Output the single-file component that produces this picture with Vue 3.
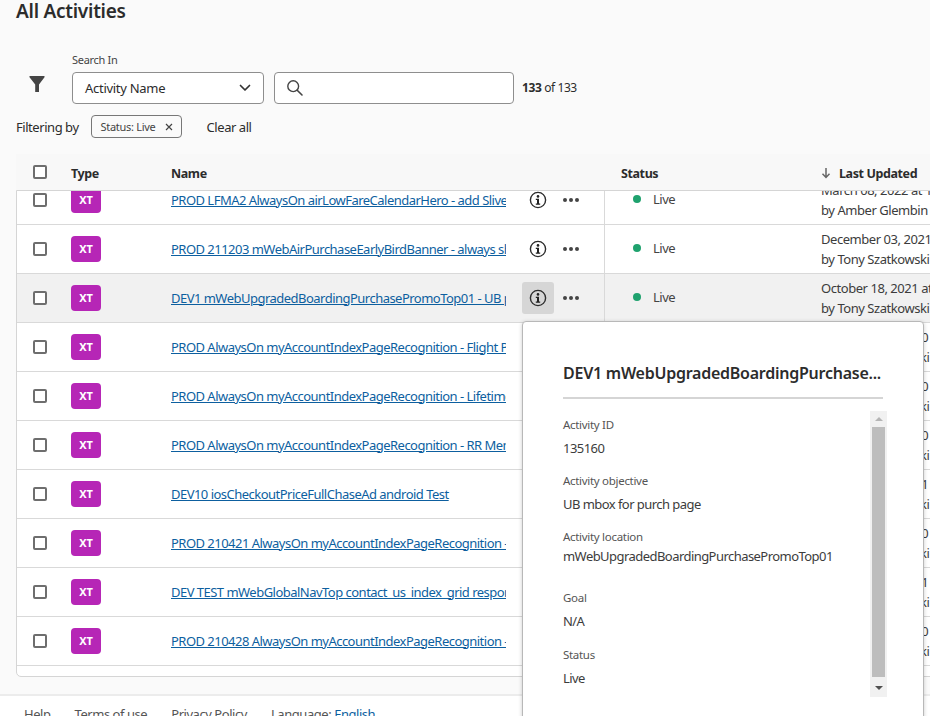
<script setup>
const rows = [
  { name: 'PROD LFMA2 AlwaysOn airLowFareCalendarHero - add Sliver Banner', date: 'March 08, 2022 at 11:02 AM', by: 'by Amber Glembin' },
  { name: 'PROD 211203 mWebAirPurchaseEarlyBirdBanner - always show', date: 'December 03, 2021 at 9:14 AM', by: 'by Tony Szatkowski' },
  { name: 'DEV1 mWebUpgradedBoardingPurchasePromoTop01 - UB purch page', date: 'October 18, 2021 at 3:40 PM', by: 'by Tony Szatkowski', active: true },
  { name: 'PROD AlwaysOn myAccountIndexPageRecognition - Flight Points', date: 'September 4, 2020 at 4:10 PM', by: 'by Tony Szatkowski' },
  { name: 'PROD AlwaysOn myAccountIndexPageRecognition - Lifetime Points', date: 'September 4, 2020 at 4:02 PM', by: 'by Tony Szatkowski' },
  { name: 'PROD AlwaysOn myAccountIndexPageRecognition - RR Member', date: 'September 4, 2020 at 3:58 PM', by: 'by Tony Szatkowski' },
  { name: 'DEV10 iosCheckoutPriceFullChaseAd android Test', date: 'September 4, 2021 at 1:20 PM', by: 'by Tony Szatkowski' },
  { name: 'PROD 210421 AlwaysOn myAccountIndexPageRecognition - Tier', date: 'September 4, 2020 at 9:41 AM', by: 'by Tony Szatkowski' },
  { name: 'DEV TEST mWebGlobalNavTop contact_us_index_grid responsive', date: 'September 4, 2021 at 2:15 PM', by: 'by Tony Szatkowski' },
  { name: 'PROD 210428 AlwaysOn myAccountIndexPageRecognition - Tier', date: 'September 4, 2020 at 9:30 AM', by: 'by Tony Szatkowski' }
]
const fields = [
  { label: 'Activity ID', value: '135160', cls: '' },
  { label: 'Activity objective', value: 'UB mbox for purch page', cls: '' },
  { label: 'Activity location', value: 'mWebUpgradedBoardingPurchasePromoTop01', cls: 'tight' },
  { label: 'Goal', value: 'N/A', cls: 'goal' },
  { label: 'Status', value: 'Live', cls: 'last' }
]
</script>

<template>
  <div class="page">
    <h1 class="title">All Activities</h1>

    <div class="search-row">
      <svg class="filter" viewBox="0 0 18 18" width="18" height="18">
        <path d="M1.5 1h15v1.3L11 9.4V17H7.2V9.4L1.5 2.3z" fill="#444" />
      </svg>
      <div class="search-in">
        <div class="small-label">Search In</div>
        <div class="select">
          <span>Activity Name</span>
          <svg viewBox="0 0 12 8" width="12" height="8"><path d="M1.5 1.5L6 6l4.5-4.5" fill="none" stroke="#333" stroke-width="1.7" stroke-linecap="round" stroke-linejoin="round" /></svg>
        </div>
      </div>
      <div class="search-box">
        <svg viewBox="0 0 18 18" width="18" height="18"><circle cx="7.2" cy="7.2" r="5.4" fill="none" stroke="#444" stroke-width="1.4" /><path d="M11.2 11.2L16 16" stroke="#444" stroke-width="1.6" stroke-linecap="round" /></svg>
      </div>
      <div class="count"><b>133</b> of 133</div>
    </div>

    <div class="filter-row">
      <span>Filtering by</span>
      <span class="chip">Status: Live
        <svg viewBox="0 0 8 8" width="8" height="8"><path d="M1 1l6 6M7 1L1 7" stroke="#444" stroke-width="1.2" /></svg>
      </span>
      <span class="clear">Clear all</span>
    </div>

    <div class="table">
      <div class="head grid">
        <div class="check-cell"><i class="check" /></div>
        <div>Type</div>
        <div>Name</div>
        <div />
        <div class="head-status">Status</div>
        <div class="head-date">
          <svg viewBox="0 0 10 12" width="10" height="12"><path d="M5 1v9M1.5 6.8L5 10.4l3.5-3.6" fill="none" stroke="#666" stroke-width="1.5" /></svg>
          <span>Last Updated</span>
        </div>
      </div>
      <div class="body">
        <div class="rows">
          <div v-for="row in rows" :key="row.name" class="row grid" :class="{ active: row.active }">
            <div class="check-cell"><i class="check" /></div>
            <div><span class="badge">XT</span></div>
            <div class="name"><a>{{ row.name }}</a></div>
            <div class="actions">
              <span class="info" :class="{ on: row.active }">
                <svg viewBox="0 0 18 18" width="18" height="18">
                  <circle cx="9" cy="9" r="7.6" fill="none" stroke="#2c2c2c" stroke-width="1.4" />
                  <circle cx="9" cy="5.4" r="1.3" fill="#222" />
                  <path d="M6.8 7.8h3.2v4.7h1.2v1.2H6.8v-1.2H8V9H6.8z" fill="#222" />
                </svg>
              </span>
              <span class="dots"><i /><i /><i /></span>
            </div>
            <div class="status"><i class="dot" />Live</div>
            <div class="date">
              <div>{{ row.date }}</div>
              <div>{{ row.by }}</div>
            </div>
          </div>
        </div>
      </div>
    </div>

    <footer class="footer">
      <span>Help</span>
      <span>Terms of use</span>
      <span>Privacy Policy</span>
      <span>Language: <a>English</a></span>
    </footer>

    <aside class="popover">
      <div class="pop-title">DEV1 mWebUpgradedBoardingPurchase...</div>
      <div class="pop-body">
        <div class="fields">
          <div v-for="f in fields" :key="f.label" class="field" :class="f.cls">
            <div class="f-label">{{ f.label }}</div>
            <div class="f-value">{{ f.value }}</div>
          </div>
        </div>
        <div class="scrollbar">
          <i class="arrow up" />
          <div class="thumb" />
          <i class="arrow down" />
        </div>
      </div>
    </aside>
  </div>
</template>

<style>
html, body { margin: 0; height: 716px; overflow: hidden; }
</style>

<style scoped>
.page {
  position: relative;
  width: 930px;
  height: 716px;
  overflow: hidden;
  background: #fafafa;
  color: #2c2c2c;
  font-family: "Noto Sans", sans-serif;
  font-size: 13px;
  letter-spacing: -0.52px;
  display: flex;
  flex-direction: column;
}
i { display: block; }
.title {
  margin: -2px 0 0 16px;
  font-size: 19px;
  line-height: 26px;
  font-weight: 600;
  letter-spacing: -0.25px;
  color: #2c2c2c;
  height: 26px;
}
.search-row {
  display: flex;
  align-items: flex-end;
  margin: 29px 0 0 16px;
  height: 52px;
}
.filter { margin: 0 26px 11px 12px; }
.small-label { font-size: 11px; line-height: 14px; color: #444; margin-bottom: 5px; letter-spacing: -0.3px; }
.select {
  width: 192px;
  height: 32px;
  box-sizing: border-box;
  border: 1px solid #8e8e8e;
  border-radius: 4px;
  background: #fff;
  display: flex;
  align-items: center;
  justify-content: space-between;
  padding: 0 12px;
  letter-spacing: -0.28px;
}
.search-box {
  width: 240px;
  height: 32px;
  margin-left: 10px;
  box-sizing: border-box;
  border: 1px solid #8e8e8e;
  border-radius: 4px;
  background: #fff;
  display: flex;
  align-items: center;
  padding-left: 11px;
}
.count { margin-left: 8px; line-height: 32px; font-size: 12px; letter-spacing: -0.4px; }
.filter-row {
  display: flex;
  align-items: center;
  margin: 11px 0 0 16px;
  height: 23px;
  letter-spacing: -0.45px;
}
.chip {
  margin-left: 12px;
  width: 91px;
  height: 23px;
  box-sizing: border-box;
  border: 1px solid #777;
  border-radius: 4px;
  font-size: 11px;
  letter-spacing: -0.3px;
  color: #444;
  display: flex;
  align-items: center;
  justify-content: space-between;
  padding: 0 8px 0 9px;
}
.clear { margin-left: 25px; }
.table {
  margin: 16px 0 0 16px;
  width: 1100px;
  height: 522px;
  display: flex;
  flex-direction: column;
}
.grid {
  display: grid;
  grid-template-columns: 55px 100px 335px 98px 217px 1fr;
  align-items: center;
}
.head {
  height: 36px;
  flex: none;
  background: #f8f8f8;
  font-weight: 700;
  font-size: 12.5px;
  letter-spacing: -0.4px;
  box-sizing: border-box;
  padding-top: 2px;
}
.head > .check-cell { padding-bottom: 3px; }
.head-status { padding-left: 17px; }
.head-date { display: flex; align-items: center; gap: 8px; }
.check-cell { padding-left: 17px; }
.check {
  width: 14px;
  height: 14px;
  box-sizing: border-box;
  border: 2px solid #6e6e6e;
  border-radius: 2px;
  background: #fff;
}
.body {
  flex: none;
  height: 487px;
  box-sizing: border-box;
  overflow: hidden;
  background: #fff;
  border: 1px solid #d5d5d5;
  border-radius: 0 0 0 5px;
}
.rows { margin: -15px 0 0 -1px; }
.row {
  height: 49px;
  box-sizing: border-box;
  border-bottom: 1px solid #d9d9d9;
}
.row.active { background: #f1f1f1; }
.badge {
  display: flex;
  align-items: center;
  justify-content: center;
  width: 30px;
  height: 26px;
  padding-bottom: 1px;
  box-sizing: border-box;
  border-radius: 4px;
  background: #b626b6;
  color: #fff;
  font-size: 11px;
  font-weight: 700;
  letter-spacing: 0;
}
.name { overflow: hidden; white-space: nowrap; padding-bottom: 1px; }
.name a { color: #0d5f9f; text-decoration: underline; }
.actions { display: flex; align-items: center; padding-left: 16px; }
.info {
  width: 32px;
  height: 32px;
  border-radius: 3px;
  display: flex;
  align-items: center;
  justify-content: center;
}
.info.on { background: #d6d6d6; }
.dots { display: flex; gap: 2px; margin-left: 9px; }
.dots i { width: 4px; height: 4px; border-radius: 50%; background: #444; }
.status {
  align-self: stretch;
  border-left: 1px solid #d9d9d9;
  display: flex;
  align-items: center;
  padding: 0 0 2px 28px;
  color: #444;
}
.dot { width: 8px; height: 8px; border-radius: 50%; background: #1fa26e; margin-right: 12px; }
.date { line-height: 20px; white-space: nowrap; color: #3c3c3c; padding-bottom: 1px; letter-spacing: -0.45px; }
.footer {
  margin-top: 18px;
  flex: none;
  height: 30px;
  box-sizing: border-box;
  border-top: 2px solid #ececec;
  background: #fff;
  padding: 9px 0 0 24px;
  display: flex;
  gap: 24px;
  color: #555;
  letter-spacing: -0.45px;
}
.footer a { color: #0d5f9f; }
.popover {
  position: absolute;
  left: 522px;
  top: 321px;
  width: 402px;
  height: 420px;
  box-sizing: border-box;
  background: #fff;
  border: 1px solid #b8b8b8;
  border-radius: 4px;
  box-shadow: 0 1px 4px rgba(0, 0, 0, 0.2);
  padding: 39px 40px 0;
}
.pop-title {
  font-size: 16px;
  font-weight: 600;
  line-height: 24px;
  color: #2c2c2c;
  letter-spacing: -0.25px;
  padding-bottom: 12px;
  border-bottom: 2px solid #d5d5d5;
  white-space: nowrap;
}
.pop-body { display: flex; margin-top: 12px; height: 286px; }
.fields { flex: 1; padding-top: 6px; }
.field { margin-bottom: 15px; }
.f-label { font-size: 11.5px; line-height: 16px; color: #555; margin-bottom: 5px; letter-spacing: -0.3px; }
.f-value { font-size: 13px; line-height: 20px; color: #3c3c3c; letter-spacing: -0.55px; }
.tight { margin-bottom: 24px; }
.tight .f-label { margin-bottom: 1px; }
.goal { margin-bottom: 16px; }
.scrollbar {
  flex: none;
  width: 17px;
  margin-right: -4px;
  background: #f1f1f1;
  display: flex;
  flex-direction: column;
  align-items: center;
}
.thumb { width: 13px; flex: 1; background: #bdbdbd; }
.arrow { width: 0; height: 0; border-left: 4px solid transparent; border-right: 4px solid transparent; }
.arrow.up { border-bottom: 4px solid #b5b5b5; margin: 6px 0 6px; }
.arrow.down { border-top: 4px solid #505050; margin: 9px 0 7px; }
</style>
